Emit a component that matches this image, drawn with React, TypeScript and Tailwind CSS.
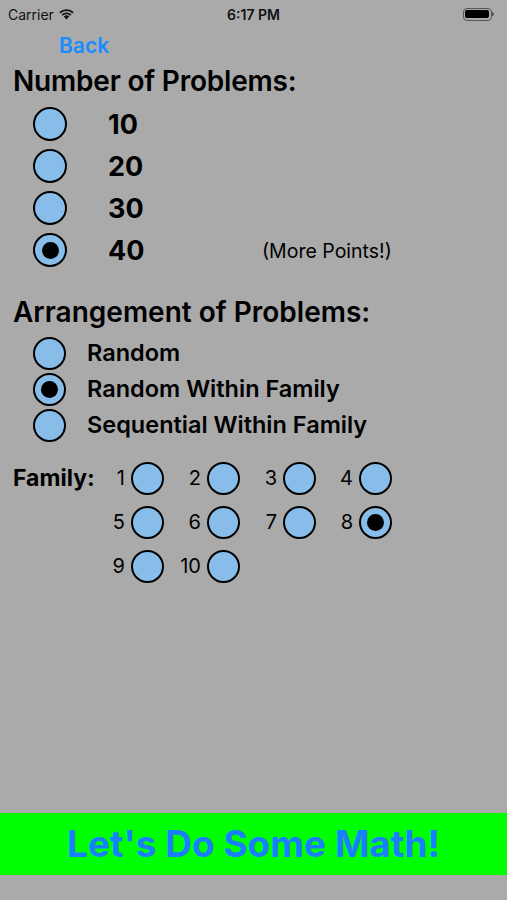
import React from 'react';

const font = { fontFamily: 'Inter, "Noto Sans", sans-serif' };

const Radio = ({ on, size = 'big' }: { on?: boolean; size?: 'big' | 'small' }) => (
  <div
    className={`${size === 'big' ? 'w-[34px] h-[34px]' : 'w-[33px] h-[33px]'} rounded-full border-2 border-black bg-[#88bde9] flex items-center justify-center shrink-0`}
  >
    {on && <div className="w-[17px] h-[17px] rounded-full bg-black" />}
  </div>
);

export default function App() {
  const counts = ['10', '20', '30', '40'];
  const arrangements = ['Random', 'Random Within Family', 'Sequential Within Family'];
  const families = [1, 2, 3, 4, 5, 6, 7, 8, 9, 10];

  return (
    <div className="min-h-[900px] h-[900px] bg-[#aaaaaa] flex flex-col text-black" style={font}>
      {/* status bar */}
      <div className="h-[28px] flex items-center justify-between px-2 text-[14px] text-[#111]">
        <div className="flex items-center gap-1 w-[120px]">
          <span>Carrier</span>
          <svg width="17" height="12" viewBox="0 0 17 12">
            <path d="M8.5 11.5 L5.8 8.6 A3.9 3.9 0 0 1 11.2 8.6 Z" fill="#111" />
            <path d="M3.6 6.4 A7 7 0 0 1 13.4 6.4 L12.1 7.8 A5.1 5.1 0 0 0 4.9 7.8 Z" fill="#111" />
            <path d="M1.3 4.1 A10.3 10.3 0 0 1 15.7 4.1 L14.4 5.5 A8.4 8.4 0 0 0 2.6 5.5 Z" fill="#111" />
          </svg>
        </div>
        <span className="font-semibold">6:17 PM</span>
        <div className="w-[120px] flex justify-end pr-[5px]">
          <div className="flex items-center">
            <div className="w-[29px] h-[13px] rounded-[4px] border border-[#555] p-[1.5px]">
              <div className="w-full h-full rounded-[2px] bg-black" />
            </div>
            <div className="w-[2px] h-[4px] bg-[#555] rounded-r-sm" />
          </div>
        </div>
      </div>

      {/* back */}
      <div className="pl-[59px] h-[36px] flex items-center text-[21px] font-semibold text-[#1a8cff]">Back</div>

      {/* number of problems */}
      <div className="pl-[13px] h-[34px] flex items-center text-[28px] font-semibold tracking-[-0.2px]">
        Number of Problems:
      </div>
      <div className="flex flex-col mt-[5px]">
        {counts.map((c, i) => (
          <div key={c} className="h-[42px] flex items-center pl-[33px]">
            <Radio on={i === 3} />
            <span className="ml-[41px] w-[40px] pt-[3px] text-[27px] font-bold">{c}</span>
            {i === 3 && <span className="ml-[114px] pt-[3px] text-[19.5px]">(More Points!)</span>}
          </div>
        ))}
      </div>

      {/* arrangement */}
      <div className="pl-[13px] h-[34px] mt-[24px] flex items-center text-[28px] font-semibold">
        Arrangement of Problems:
      </div>
      <div className="flex flex-col mt-[6px]">
        {arrangements.map((a, i) => (
          <div key={a} className="h-[36px] flex items-center pl-[33px]">
            <Radio on={i === 1} size="small" />
            <span className="ml-[21px] text-[23.5px] font-semibold">{a}</span>
          </div>
        ))}
      </div>

      {/* family */}
      <div className="flex pl-[13px] mt-[18px]">
        <div className="w-[87px] h-[34px] flex items-center text-[23px] font-bold whitespace-nowrap">Family:</div>
        <div className="grid grid-cols-[repeat(4,64px)] gap-x-[12px] gap-y-[10px]">
          {families.map((f) => (
            <div key={f} className="h-[34px] flex items-center justify-end gap-[6px]">
              <span className="text-[20px]">{f}</span>
              <Radio on={f === 8} size="small" />
            </div>
          ))}
        </div>
      </div>

      <div className="flex-1" />

      {/* go button */}
      <div className="h-[62px] bg-[#00ff00] flex items-center justify-center">
        <span className="text-[37px] font-bold text-[#1a7fff]">Let's Do Some Math!</span>
      </div>
      <div className="h-[25px]" />
    </div>
  );
}
